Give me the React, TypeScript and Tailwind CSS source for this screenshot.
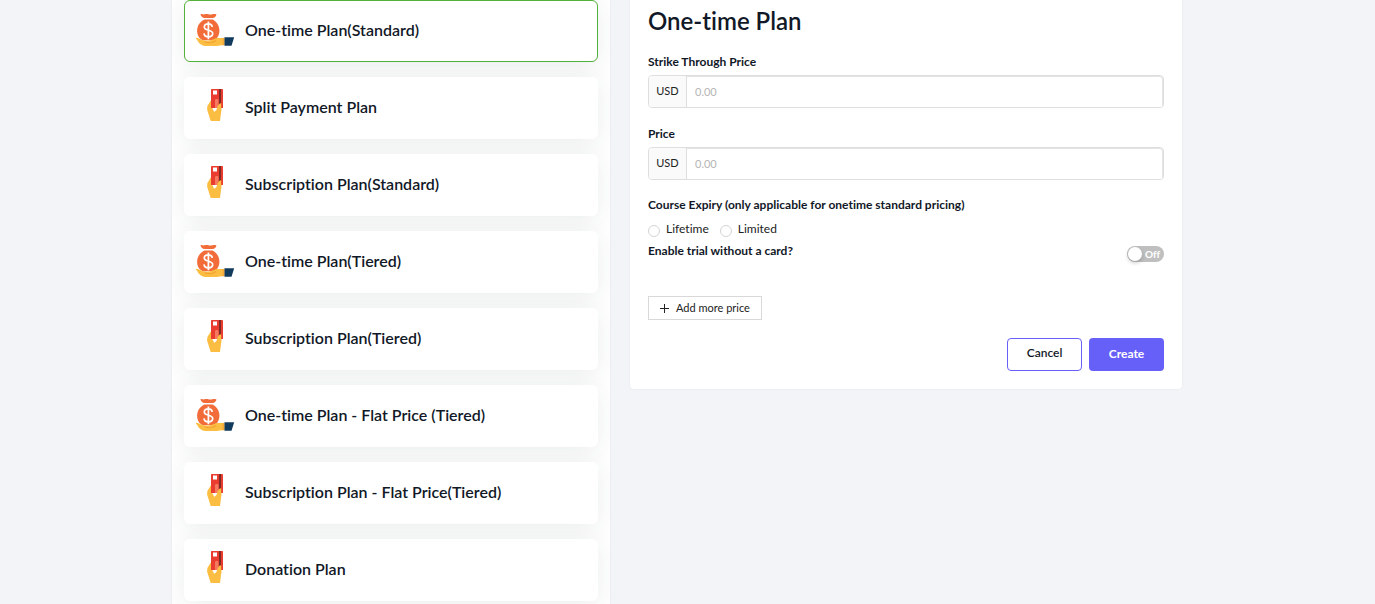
import { useState } from "react";

type PlanIcon = "money" | "card";

// ── Plan options ──────────────────────────────────────────────────────

const PLANS: Array<{ id: string; label: string; icon: PlanIcon }> = [
  { id: "onetime", label: "One-time Plan(Standard)", icon: "money" },
  { id: "split", label: "Split Payment Plan", icon: "card" },
  { id: "sub", label: "Subscription Plan(Standard)", icon: "card" },
  { id: "onetime_tiered", label: "One-time Plan(Tiered)", icon: "money" },
  { id: "sub_tiered", label: "Subscription Plan(Tiered)", icon: "card" },
  { id: "onetime_flat", label: "One-time Plan - Flat Price (Tiered)", icon: "money" },
  { id: "sub_flat", label: "Subscription Plan - Flat Price(Tiered)", icon: "card" },
  { id: "donation", label: "Donation Plan", icon: "card" },
];

// ── Icons ─────────────────────────────────────────────────────────────

function MoneyIcon() {
  return (
    <svg width="40" height="38" viewBox="0 0 40 38" fill="none" aria-hidden="true">
      <path
        d="M5.500 2.200c1.600-.4 2.700.5 4 .1 1.400-.4 2.600-.4 4 0 1.400.4 2.500.3 3.800-.1 1.400-.4 2.800-.2 4.200.2-.6 2-1.900 3.400-4 3.600h-7.900c-2.200-.2-3.700-1.700-4.100-3.800Z"
        fill="#f26c3a"
      />
      <path
        d="M9.500 7.500h8c3.800 1.700 6.900 6 6.900 11.200 0 5.600-3.400 9.600-7.900 9.600H10c-4.600 0-7.900-4-7.900-9.600C2.100 13.500 5.500 9.200 9.500 7.500Z"
        fill="#f26c3a"
      />
      <path
        d="M17.300 14.800c-.3-1.800-1.800-2.900-3.900-2.900-2.400 0-4.100 1.200-4.100 3.100 0 4.300 8.400 2.100 8.400 6.500 0 2-1.800 3.300-4.200 3.300-2.600 0-4.300-1.300-4.500-3.400M13.400 9.500v17.700"
        stroke="#fff"
        strokeWidth="1.7"
      />
      <path
        d="M.8 25.800c1.700-.4 3.200.6 4.900 1.500 2.200 1.200 4.600 1.600 7.300 1.400 1.500-.1 2.700-.4 4-.9 1.800-.7 3.200-1.800 5.200-1.800H28v7.300c-2.200 0-4 .7-6.500.7h-9.300c-5 0-8.200-2.400-9.700-5.600-.6-1-1.400-1.400-1.700-2.600Z"
        fill="#fbbd42"
      />
      <path d="M9.500 29.800c4 1.600 8.800 1.200 11.300-1.300" stroke="#f3a236" strokeWidth="1.200" />
      <path d="M27.600 25.900h2.100v7.400h-2.100Z" fill="#f5a93c" />
      <path d="M29.500 25.300h9.700l-2.700 8.500h-7Z" fill="#123a5c" />
    </svg>
  );
}

function CardIcon() {
  return (
    <svg width="40" height="38" viewBox="0 0 40 38" fill="none" aria-hidden="true">
      <path d="M16 11.300 12.400 17l-.3 3.500 2 6.500 1.600 5H25l1.300-10.500V16Z" fill="#fbbd42" />
      <rect x="16" y="0" width="12" height="19" rx="0.600" fill="#ea3d2f" />
      <rect x="24" y="0" width="2" height="19" fill="#7c2a25" />
      <rect x="18" y="1.500" width="4" height="4" fill="#fff" />
      <path d="M17.300 19h4.700c-.3 2-1.500 3.500-2.900 3.800Z" fill="#fff" />
      <path d="M20 11c0-1.500 3.500-1.500 3.500 0v8H20Z" fill="#f4795f" />
      <path d="M22.500 17.500c1-2 1.800-3.300 3.700-3.300v8h-4.400Z" fill="#fbbd42" />
    </svg>
  );
}

// ── Form pieces ───────────────────────────────────────────────────────

function PriceField({ id, label }: { id: string; label: string }) {
  return (
    <div>
      <label htmlFor={id} className="block text-[12px] leading-4 font-bold text-[#111827]">
        {label}
      </label>
      <div className="mt-[5px] flex h-[33px] overflow-hidden rounded border border-[#dedede]">
        <span className="flex w-[38px] items-center justify-center border-r border-[#dedede] bg-[#fafafa] text-[11px] text-[#222]">
          USD
        </span>
        <input
          id={id}
          type="text"
          placeholder="0.00"
          className="min-w-0 flex-1 rounded-tr-sm border-t border-r border-[#e4e4e4] bg-white px-2 text-[11px] text-[#222] outline-none placeholder:text-[#b5b5b5]"
        />
      </div>
    </div>
  );
}

function ExpiryOption({ label }: { label: string }) {
  return (
    <label className="flex items-start gap-1.5 text-[12px] leading-4 text-[#222]">
      <input
        type="radio"
        name="expiry"
        className="mt-1 size-3 appearance-none rounded-full border border-[#d4d4d4] bg-white checked:border-4 checked:border-[#6760f8]"
      />
      {label}
    </label>
  );
}

// ── Page ──────────────────────────────────────────────────────────────

export default function App() {
  const [selected, setSelected] = useState("onetime");
  const [trial, setTrial] = useState(false);

  return (
    <main className="flex min-h-screen justify-center bg-[#f2f4f8] pr-[21px] font-['Lato',sans-serif] [font-variant-ligatures:none]">
      <div className="grid w-full max-w-[1010px] grid-cols-[438fr_552fr] gap-5">
        {/* Plan list */}
        <section className="flex flex-col gap-[15px] overflow-hidden bg-white px-3 shadow-[0_0_2px_rgba(0,0,0,0.08)]">
          {PLANS.map((p) => (
            <button
              key={p.id}
              type="button"
              onClick={() => setSelected(p.id)}
              className={`flex h-[62px] shrink-0 items-center gap-2.5 rounded-md border bg-white px-2.5 text-left text-[16px] font-semibold text-[#111827] shadow-[0_4px_24px_rgba(30,50,50,0.09)] ${
                selected === p.id ? "border-[#52b13a]" : "border-transparent"
              }`}
            >
              {p.icon === "money" ? <MoneyIcon /> : <CardIcon />}
              <span className="pb-0.5">{p.label}</span>
            </button>
          ))}
        </section>

        {/* Pricing form */}
        <form
          className="self-start rounded-b bg-white px-[18px] pt-[5px] pb-[18px] shadow-[0_0_2px_rgba(0,0,0,0.08)]"
          onSubmit={(e) => e.preventDefault()}
        >
          <h1 className="text-[24px] leading-8 font-semibold text-[#111827]">One-time Plan</h1>

          <div className="mt-[17px] flex flex-col gap-[18px]">
            <PriceField id="strike-price" label="Strike Through Price" />
            <PriceField id="price" label="Price" />
          </div>

          <fieldset className="mt-[17px]">
            <legend className="text-[12px] leading-4 font-bold text-[#111827]">
              Course Expiry (only applicable for onetime standard pricing)
            </legend>
            <div className="mt-2 flex gap-[11px]">
              <ExpiryOption label="Lifetime" />
              <ExpiryOption label="Limited" />
            </div>
          </fieldset>

          <div className="mt-1.5 flex items-start justify-between">
            <label htmlFor="trial" className="text-[12px] leading-4 font-bold text-[#111827]">
              Enable trial without a card?
            </label>
            <button
              id="trial"
              type="button"
              role="switch"
              aria-checked={trial}
              onClick={() => setTrial(!trial)}
              className={`mt-[3px] flex h-4 w-[37px] items-center gap-[3px] rounded-full px-px text-[10px] font-bold text-white ${
                trial ? "flex-row-reverse bg-[#6760f8]" : "bg-[#bfbfbf]"
              }`}
            >
              <span className="size-3.5 rounded-full bg-white shadow-[0_2px_4px_rgba(0,0,0,0.2)]" />
              {trial ? "On" : "Off"}
            </button>
          </div>

          <button
            type="button"
            className="mt-[34px] flex h-6 items-center gap-[7px] border border-[#d9d9d9] bg-white px-[11px] text-[11px] text-[#222]"
          >
            <svg width="9" height="9" viewBox="0 0 9 9" stroke="#222" aria-hidden="true">
              <path d="M4.500 0v9M0 4.500h9" />
            </svg>
            Add more price
          </button>

          <div className="mt-[18px] flex justify-end gap-[7px]">
            <button
              type="button"
              className="h-[33px] w-[75px] rounded border border-[#6760f8] bg-white pb-1 text-[12px] font-semibold text-[#111827]"
            >
              Cancel
            </button>
            <button
              type="submit"
              className="h-[33px] w-[75px] rounded bg-[#6760f8] pb-0.5 text-[12px] font-bold text-white"
            >
              Create
            </button>
          </div>
        </form>
      </div>
    </main>
  );
}
